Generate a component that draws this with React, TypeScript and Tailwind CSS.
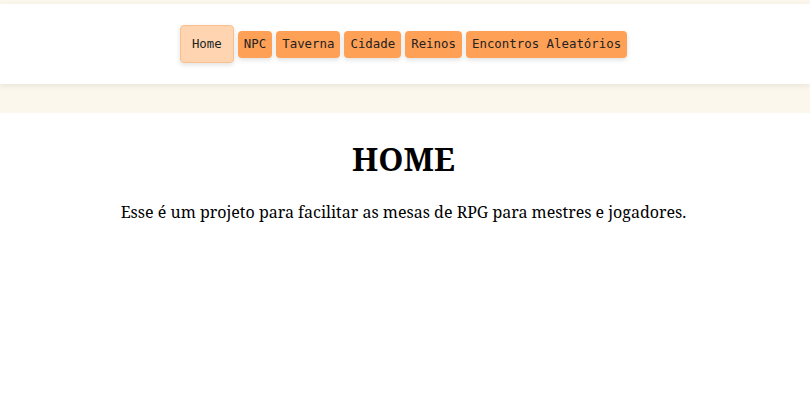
import React from "react";

const items = ["NPC", "Taverna", "Cidade", "Reinos", "Encontros Aleatórios"];

export default function App() {
  return (
    <div className="min-h-screen bg-white">
      <div className="bg-[#fcf7ec] pt-1 pb-[29px]">
        <header className="h-20 pr-[3px] bg-white shadow-[0_2px_6px_rgba(0,0,0,0.08)] flex items-center justify-center gap-1 font-['DejaVu_Sans_Mono',monospace] text-[12.4px] text-[#222]">
          <button className="h-[38px] w-[54px] rounded-[4px] bg-[#fed5b0] border border-[#fcc08e] shadow-[0_2px_5px_rgba(0,0,0,0.12)]">
            Home
          </button>
          {items.map((t) => (
            <button
              key={t}
              className="h-[27px] px-[6px] rounded-[4px] bg-[#ffa057] shadow-[0_2px_5px_rgba(0,0,0,0.12)]"
            >
              {t}
            </button>
          ))}
        </header>
      </div>
      <main className="pr-[3px] text-center text-black font-['Noto_Serif','DejaVu_Serif',serif]">
        <h1 className="pt-[23.5px] text-[32px] font-bold leading-[1.362]">HOME</h1>
        <p className="mt-[21.44px] text-[16px] leading-[1.362]">
          Esse é um projeto para facilitar as mesas de RPG para mestres e jogadores.
        </p>
      </main>
    </div>
  );
}
